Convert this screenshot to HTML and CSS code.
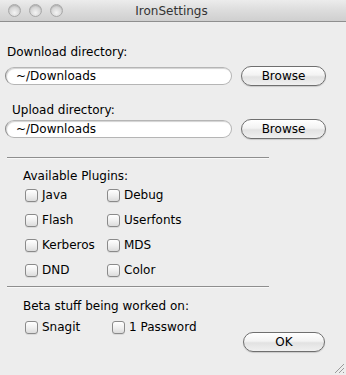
FILE: index.html
```html
<!DOCTYPE html>
<html lang="en">
<head>
    <meta charset="UTF-8">
    <meta name="viewport" content="width=device-width, initial-scale=1.0">
    <title>IronSettings</title>
    <link rel="stylesheet" href="styles.css">
</head>
<body>
    <div class="window">
        <div class="titlebar">
            <div class="lights">
                <span class="light"></span>
                <span class="light"></span>
                <span class="light"></span>
            </div>
            <div class="title">IronSettings</div>
        </div>

        <div class="content">
            <div class="field-label">Download directory:</div>
            <div class="path-row first">
                <div class="path-input">~/Downloads</div>
                <button class="aqua-btn">Browse</button>
            </div>

            <div class="field-label indent">Upload directory:</div>
            <div class="path-row second">
                <div class="path-input">~/Downloads</div>
                <button class="aqua-btn">Browse</button>
            </div>

            <div class="separator"></div>

            <div class="group">
                <div class="group-title">Available Plugins:</div>
                <div class="plugins">
                    <label class="check"><span class="box"></span>Java</label>
                    <label class="check"><span class="box"></span>Debug</label>
                    <label class="check"><span class="box"></span>Flash</label>
                    <label class="check"><span class="box"></span>Userfonts</label>
                    <label class="check"><span class="box"></span>Kerberos</label>
                    <label class="check"><span class="box"></span>MDS</label>
                    <label class="check"><span class="box"></span>DND</label>
                    <label class="check"><span class="box"></span>Color</label>
                </div>
            </div>

            <div class="separator"></div>

            <div class="group">
                <div class="group-title">Beta stuff being worked on:</div>
                <div class="beta">
                    <label class="check snagit"><span class="box"></span>Snagit</label>
                    <label class="check"><span class="box"></span>1 Password</label>
                </div>
            </div>

            <div class="footer">
                <button class="aqua-btn">OK</button>
            </div>
        </div>

        <svg class="grip" width="12" height="12" viewBox="0 0 12 12">
            <path d="M11 2 L2 11 M11 6 L6 11 M11 10 L10 11" stroke="#9a9a9a" stroke-width="1"/>
        </svg>
    </div>
</body>
</html>
```

FILE: styles.css
```css
* {
    margin: 0;
    padding: 0;
    box-sizing: border-box;
}

html, body {
    width: 346px;
    height: 375px;
    overflow: hidden;
}

body {
    font-family: "DejaVu Sans", "Liberation Sans", sans-serif;
    font-size: 12px;
    color: #000;
    background: #ededed;
}

.window {
    position: relative;
    width: 346px;
    height: 375px;
    background: #ededed;
}

.titlebar {
    height: 22px;
    display: flex;
    align-items: center;
    background: linear-gradient(#ececec 0%, #dcdcdc 50%, #cfcfcf 100%);
    border-bottom: 1px solid #8f8f8f;
}

.lights {
    display: flex;
    gap: 8px;
    padding-left: 8px;
}

.light {
    width: 13px;
    height: 13px;
    border-radius: 50%;
    background: radial-gradient(circle at 50% 70%, #f4f4f4 0%, #d6d6d6 55%, #c4c4c4 100%);
    border: 1px solid #a8a8a8;
    box-shadow: inset 0 1px 1px rgba(0, 0, 0, 0.15);
}

.title {
    flex: 1;
    text-align: center;
    font-size: 12px;
    color: #333;
    padding-right: 70px;
    padding-left: 4px;
}

.content {
    padding-top: 22px;
}

.field-label {
    padding-left: 7px;
    height: 16px;
    line-height: 16px;
}

.field-label.indent {
    padding-left: 12px;
}

.path-row {
    display: flex;
    align-items: center;
    padding-left: 5px;
}

.path-row.first {
    margin-top: 6px;
    margin-bottom: 16px;
}

.path-row.second {
    margin-top: 1px;
    margin-bottom: 18px;
}

.path-input {
    width: 227px;
    height: 18px;
    line-height: 17px;
    background: #fff;
    border: 1px solid #b5b5b5;
    border-left-color: #8a8a8a;
    border-radius: 9px;
    box-shadow: inset 1px 1px 1px rgba(0, 0, 0, 0.18);
    padding-left: 10px;
    font-size: 12px;
}

.aqua-btn {
    font-family: inherit;
    font-size: 12px;
    color: #000;
    width: 85px;
    height: 20px;
    border: 1px solid #6f6f6f;
    border-radius: 10px;
    background: linear-gradient(#ffffff 0%, #f3f3f3 45%, #e2e2e2 55%, #f0f0f0 100%);
    box-shadow: 0 1px 1px rgba(0, 0, 0, 0.15);
}

.path-row .aqua-btn {
    margin-left: 9px;
}

.separator {
    width: 262px;
    margin-left: 7px;
    height: 2px;
    border-top: 1px solid #8e8e8e;
    border-bottom: 1px solid #f8f8f8;
}

.group {
    padding-left: 23px;
}

.group-title {
    margin-top: 9px;
    height: 16px;
    line-height: 16px;
}

.plugins {
    display: grid;
    grid-template-columns: 82px 100px;
    row-gap: 9px;
    padding-left: 2px;
    margin-top: 3px;
    margin-bottom: 8px;
}

.check {
    display: flex;
    align-items: center;
    gap: 4px;
    height: 16px;
    line-height: 16px;
}

.box {
    width: 13px;
    height: 13px;
    border: 1px solid #8a8a8a;
    border-radius: 3px;
    background: linear-gradient(#ffffff 0%, #f0f0f0 50%, #dcdcdc 100%);
    box-shadow: 0 1px 0 rgba(0, 0, 0, 0.08);
}

.beta {
    display: flex;
    padding-left: 2px;
    margin-top: 5px;
}

.group + .separator + .group .group-title {
    margin-top: 10px;
}

.snagit {
    width: 87px;
}

.footer {
    display: flex;
    justify-content: flex-end;
    padding-right: 21px;
    margin-top: -3px;
}

.footer .aqua-btn {
    width: 82px;
}

.grip {
    position: absolute;
    right: 1px;
    bottom: 1px;
}
```
